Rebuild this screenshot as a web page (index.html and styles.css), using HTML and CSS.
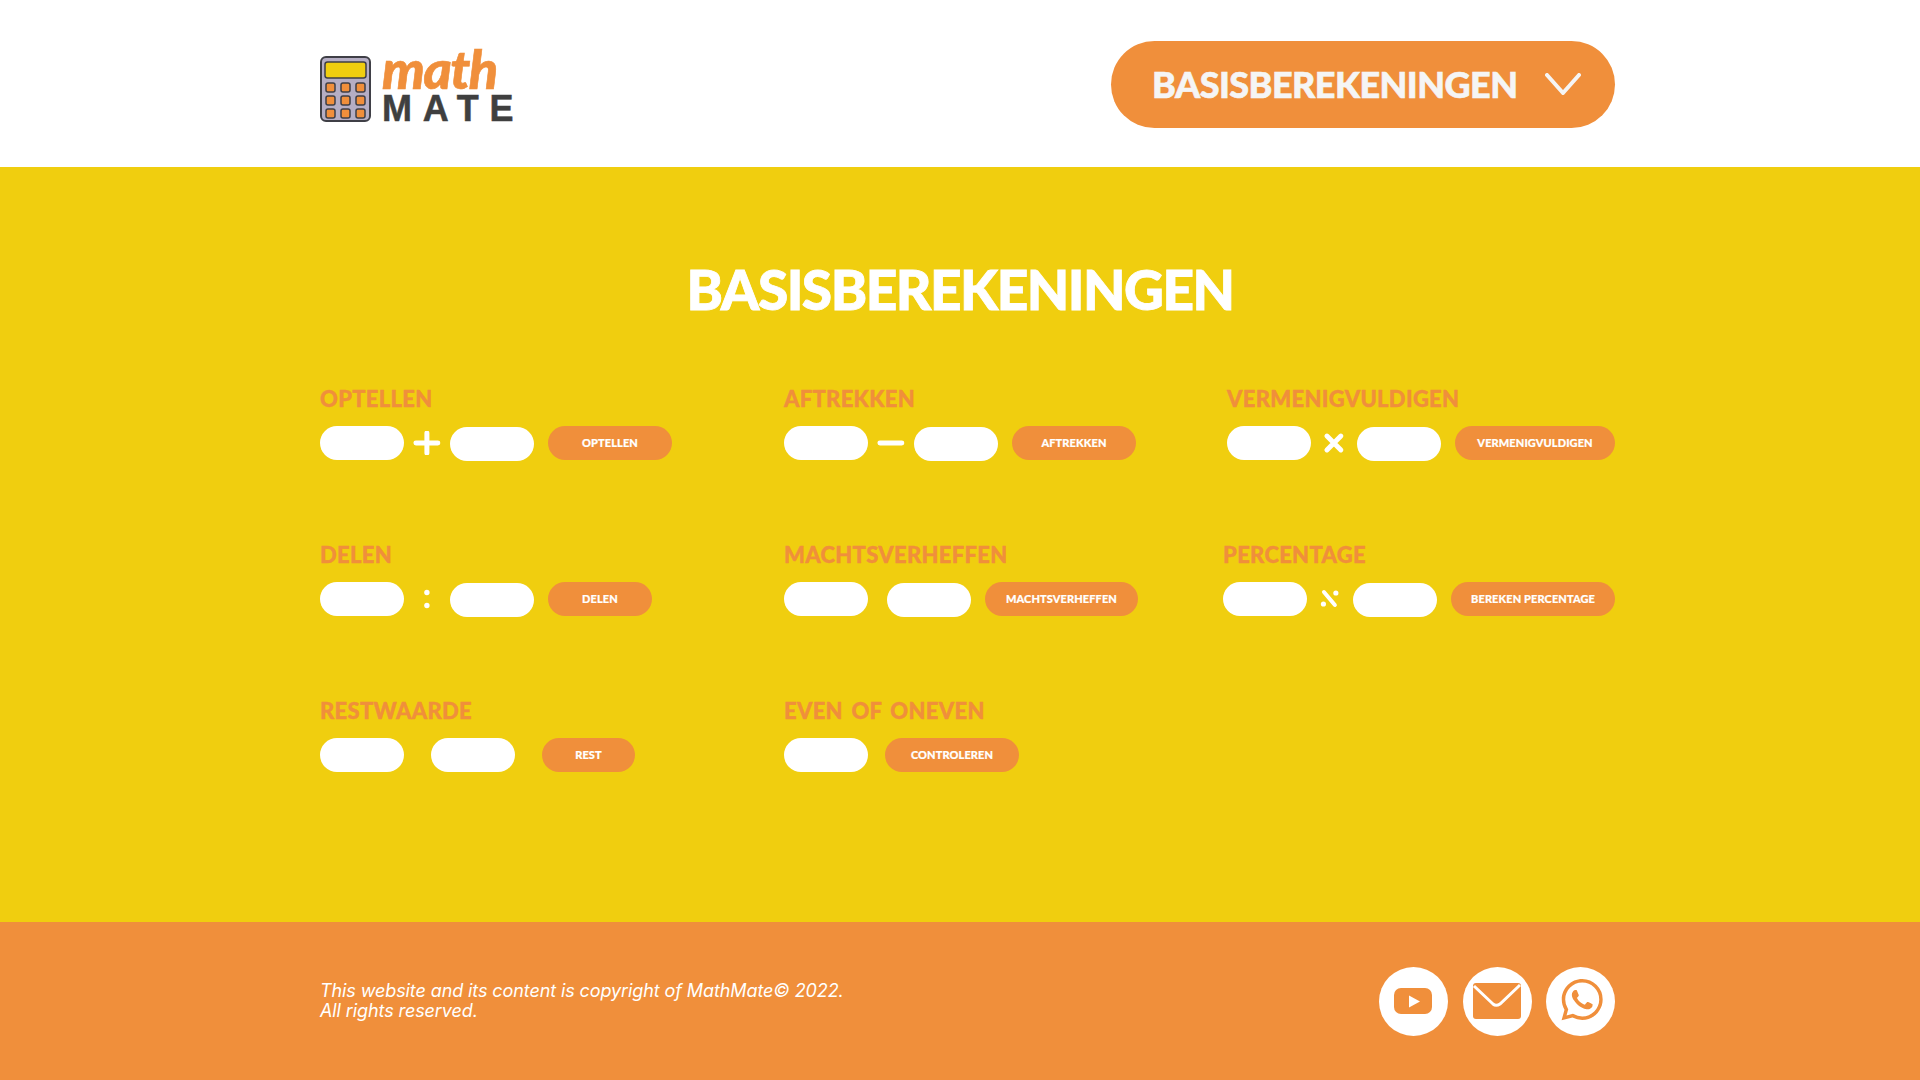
FILE: index.html

```html
<!DOCTYPE html>
<html lang="nl">
<head>
    <meta charset="UTF-8">
    <title>MathMate - Basisberekeningen</title>
    <link rel="stylesheet" href="styles.css">
</head>
<body>
    <header class="top">
        <a class="logo" href="#">
            <svg class="logo-calc" viewBox="0 0 51 66" width="51" height="66">
                <rect x="1" y="1" width="49" height="64" rx="5" fill="#b5aec4" stroke="#3f3f46" stroke-width="2"/>
                <rect x="5" y="6" width="41" height="16" rx="2.5" fill="#f0ce0f" stroke="#3f3f46" stroke-width="1.5"/>
                <g fill="#f08f3b" stroke="#3f3f46" stroke-width="1.5">
                    <rect x="6" y="27" width="9" height="9" rx="2"/>
                    <rect x="21" y="27" width="9" height="9" rx="2"/>
                    <rect x="36" y="27" width="9" height="9" rx="2"/>
                    <rect x="6" y="40" width="9" height="9" rx="2"/>
                    <rect x="21" y="40" width="9" height="9" rx="2"/>
                    <rect x="36" y="40" width="9" height="9" rx="2"/>
                    <rect x="6" y="53" width="9" height="9" rx="2"/>
                    <rect x="21" y="53" width="9" height="9" rx="2"/>
                    <rect x="36" y="53" width="9" height="9" rx="2"/>
                </g>
            </svg>
            <span class="logo-text">
                <span class="logo-math">math</span>
                <span class="logo-mate">MATE</span>
            </span>
        </a>
        <button class="menu-btn" type="button">
            <span>BASISBEREKENINGEN</span>
            <svg viewBox="0 0 36 22" width="36" height="22">
                <path d="M2 2 L18 20 L34 2" fill="none" stroke="#f5f5f5" stroke-width="4" stroke-linecap="round" stroke-linejoin="round"/>
            </svg>
        </button>
    </header>

    <main class="content">
        <h1>BASISBEREKENINGEN</h1>
        <div class="calc-grid">
            <section class="calc">
                <h2>OPTELLEN</h2>
                <div class="calc-row">
                    <input type="text">
                    <svg class="op" viewBox="0 0 46 24" width="46" height="24"><path d="M12 12 H34 M23 2 V22" class="op-line"/></svg>
                    <input class="second" type="text">
                    <button class="btn w-124" type="button">OPTELLEN</button>
                </div>
            </section>
            <section class="calc">
                <h2>AFTREKKEN</h2>
                <div class="calc-row">
                    <input type="text">
                    <svg class="op" viewBox="0 0 46 24" width="46" height="24"><path d="M12 12 H34" class="op-line"/></svg>
                    <input class="second" type="text">
                    <button class="btn w-124" type="button">AFTREKKEN</button>
                </div>
            </section>
            <section class="calc calc-right">
                <h2>VERMENIGVULDIGEN</h2>
                <div class="calc-row">
                    <input type="text">
                    <svg class="op" viewBox="0 0 46 24" width="46" height="24"><path d="M16 5 L30 19 M30 5 L16 19" class="op-line"/></svg>
                    <input class="second" type="text">
                    <button class="btn w-160" type="button">VERMENIGVULDIGEN</button>
                </div>
            </section>

            <section class="calc">
                <h2>DELEN</h2>
                <div class="calc-row">
                    <input type="text">
                    <svg class="op" viewBox="0 0 46 24" width="46" height="24"><circle cx="23" cy="5.5" r="2.7" fill="#fff"/><circle cx="23" cy="18.5" r="2.7" fill="#fff"/></svg>
                    <input class="second" type="text">
                    <button class="btn w-104" type="button">DELEN</button>
                </div>
            </section>
            <section class="calc">
                <h2>MACHTSVERHEFFEN</h2>
                <div class="calc-row">
                    <input type="text">
                    <input class="second gap-19" type="text">
                    <button class="btn w-153" type="button">MACHTSVERHEFFEN</button>
                </div>
            </section>
            <section class="calc calc-right">
                <h2>PERCENTAGE</h2>
                <div class="calc-row">
                    <input type="text">
                    <svg class="op" viewBox="0 0 46 24" width="46" height="24"><path d="M17 5 L28 18" class="op-line op-thin"/><circle cx="16.5" cy="17" r="2.6" fill="#fff"/><circle cx="29" cy="6" r="2.6" fill="#fff"/></svg>
                    <input class="second" type="text">
                    <button class="btn w-164" type="button">BEREKEN PERCENTAGE</button>
                </div>
            </section>

            <section class="calc">
                <h2>RESTWAARDE</h2>
                <div class="calc-row row-flat">
                    <input type="text">
                    <input class="gap-27" type="text">
                    <button class="btn gap-27 w-93" type="button">REST</button>
                </div>
            </section>
            <section class="calc">
                <h2>EVEN OF ONEVEN</h2>
                <div class="calc-row row-flat">
                    <input type="text">
                    <button class="btn gap-16 w-134" type="button">CONTROLEREN</button>
                </div>
            </section>
        </div>
    </main>

    <footer class="bottom">
        <p>This website and its content is copyright of MathMate© 2022.<br>All rights reserved.</p>
        <div class="socials">
            <a class="social" href="#">
                <svg viewBox="0 0 69 69" width="69" height="69">
                    <circle cx="34.5" cy="34.5" r="34.5" fill="#fff"/>
                    <rect x="15" y="21" width="38" height="26" rx="7" fill="#f08f3b"/>
                    <path d="M30 28.5 V40.5 L41 34.5 Z" fill="#fff"/>
                </svg>
            </a>
            <a class="social" href="#">
                <svg viewBox="0 0 69 69" width="69" height="69">
                    <circle cx="34.5" cy="34.5" r="34.5" fill="#fff"/>
                    <rect x="10" y="16" width="48" height="36" rx="3" fill="#f08f3b"/>
                    <path d="M11 19 L30 37 Q33 39.5 37 37 L57 18" fill="none" stroke="#fff" stroke-width="3"/>
                </svg>
            </a>
            <a class="social" href="#">
                <svg viewBox="0 0 69 69" width="69" height="69">
                    <circle cx="34.5" cy="34.5" r="34.5" fill="#fff"/>
                    <path transform="translate(15.5 12) scale(1.72)" fill="#f08f3b" d="M17.472 14.382c-.297-.149-1.758-.867-2.03-.967-.273-.099-.471-.148-.67.15-.197.297-.767.966-.94 1.164-.173.199-.347.223-.644.075-.297-.15-1.255-.463-2.39-1.475-.883-.788-1.48-1.761-1.653-2.059-.173-.297-.018-.458.13-.606.134-.133.298-.347.446-.52.149-.174.198-.298.298-.497.099-.198.05-.371-.025-.52-.075-.149-.669-1.612-.916-2.207-.242-.579-.487-.5-.669-.51-.173-.008-.371-.01-.57-.01-.198 0-.52.074-.792.372-.272.297-1.04 1.016-1.04 2.479 0 1.462 1.065 2.875 1.213 3.074.149.198 2.096 3.2 5.077 4.487.709.306 1.262.489 1.694.625.712.227 1.36.195 1.871.118.571-.085 1.758-.719 2.006-1.413.248-.694.248-1.289.173-1.413-.074-.124-.272-.198-.57-.347m-5.421 7.403h-.004a9.87 9.87 0 01-5.031-1.378l-.361-.214-3.741.982.998-3.648-.235-.374a9.86 9.86 0 01-1.51-5.26c.001-5.45 4.436-9.884 9.888-9.884 2.64 0 5.122 1.03 6.988 2.898a9.825 9.825 0 012.893 6.994c-.003 5.45-4.437 9.884-9.885 9.884m8.413-18.297A11.815 11.815 0 0012.05 0C5.495 0 .16 5.335.157 11.892c0 2.096.547 4.142 1.588 5.945L.057 24l6.305-1.654a11.882 11.882 0 005.683 1.448h.005c6.554 0 11.89-5.335 11.893-11.893a11.821 11.821 0 00-3.48-8.413z"/>
                </svg>
            </a>
        </div>
    </footer>
</body>
</html>
```

FILE: styles.css

```css
body {
    margin: 0;
    font-family: Lato, Arial, sans-serif;
    background: #fff;
}

.top {
    height: 167px;
    padding: 0 305px 0 320px;
    display: flex;
    align-items: center;
    justify-content: space-between;
}
.logo {
    display: flex;
    align-items: flex-end;
    gap: 11px;
    text-decoration: none;
    margin-top: 4px;
}
.logo-calc {
    display: block;
    margin-bottom: 2px;
}
.logo-text {
    display: flex;
    flex-direction: column;
}
.logo-math {
    font-family: Lato, sans-serif;
    font-weight: 900;
    font-style: italic;
    font-size: 54px;
    line-height: 44px;
    letter-spacing: -1.5px;
    margin-bottom: 3px;
    color: #f08f3b;
    -webkit-text-stroke: 0.6px #f08f3b;
}
.logo-mate {
    font-family: "Liberation Sans", Arial, sans-serif;
    font-weight: 700;
    font-size: 36px;
    line-height: 30px;
    letter-spacing: 10.7px;
    color: #3f3f3f;
    -webkit-text-stroke: 0.5px #3f3f3f;
}
.menu-btn {
    width: 504px;
    height: 87px;
    margin-top: 1px;
    border: none;
    border-radius: 44px;
    background: #f08f3b;
    color: #f5f5f5;
    font-family: Lato, Arial, sans-serif;
    font-weight: 900;
    font-size: 36px;
    letter-spacing: -0.55px;
    -webkit-text-stroke: 0.6px #f5f5f5;
    padding: 0 34px 0 41px;
    display: flex;
    align-items: center;
    justify-content: space-between;
    cursor: pointer;
}

.content {
    height: 755px;
    box-sizing: border-box;
    padding-top: 88px;
    background: #f0ce0f;
}
h1 {
    margin: 0 0 63px;
    text-align: center;
    color: #fff;
    font-size: 55px;
    line-height: 68px;
    letter-spacing: -1.5px;
    font-weight: 900;
    -webkit-text-stroke: 0.8px #fff;
}
.calc-grid {
    padding: 0 305px 0 320px;
    display: grid;
    grid-template-columns: 464px 1fr 400px;
    grid-auto-rows: 156px;
}
.calc-right {
    justify-self: end;
}
h2 {
    margin: 0 0 14px;
    color: #f08f3b;
    font-size: 22px;
    line-height: 26px;
    letter-spacing: 0.3px;
    word-spacing: 3px;
    font-weight: 900;
    -webkit-text-stroke: 0.4px #f08f3b;
}
.calc-row {
    display: flex;
    align-items: flex-start;
}
input {
    width: 84.2px;
    height: 34px;
    padding: 0 12px;
    box-sizing: border-box;
    border: none;
    border-radius: 17px;
    background: #fff;
    outline: none;
}
.second {
    margin-top: 1px;
}
.op {
    display: block;
    flex: none;
    width: 45.8px;
    margin-top: 5px;
}
.op-line {
    fill: none;
    stroke: #fff;
    stroke-width: 5;
    stroke-linecap: round;
}
.op-thin {
    stroke-width: 4;
}
.gap-19 {
    margin-left: 18.8px;
}
.gap-27 {
    margin-left: 26.8px;
}

.btn {
    height: 34px;
    margin-left: 13.8px;
    padding: 0 0 1px;
    border: none;
    border-radius: 17px;
    background: #f08f3b;
    color: #fff;
    font-family: Lato, Arial, sans-serif;
    font-weight: 900;
    font-size: 11px;
    letter-spacing: 0.1px;
    -webkit-text-stroke: 0.2px #fff;
    cursor: pointer;
}
.btn.gap-27 {
    margin-left: 26.8px;
}
.btn.gap-16 {
    margin-left: 16.8px;
}
.w-93 { width: 93px; }
.w-104 { width: 104px; }
.w-124 { width: 124px; }
.w-134 { width: 134px; }
.w-153 { width: 153px; }
.w-160 { width: 160px; }
.w-164 { width: 164px; }

.bottom {
    height: 158px;
    padding: 0 305px 0 320px;
    display: flex;
    align-items: center;
    justify-content: space-between;
    background: #f08f3b;
}
.bottom p {
    margin: 0;
    color: #fff;
    font-family: Inter, Arial, sans-serif;
    font-style: italic;
    font-size: 18px;
    line-height: 20px;
    letter-spacing: -0.1px;
}
.socials {
    display: flex;
    gap: 14.5px;
}
.social {
    display: block;
    height: 69px;
}
```
